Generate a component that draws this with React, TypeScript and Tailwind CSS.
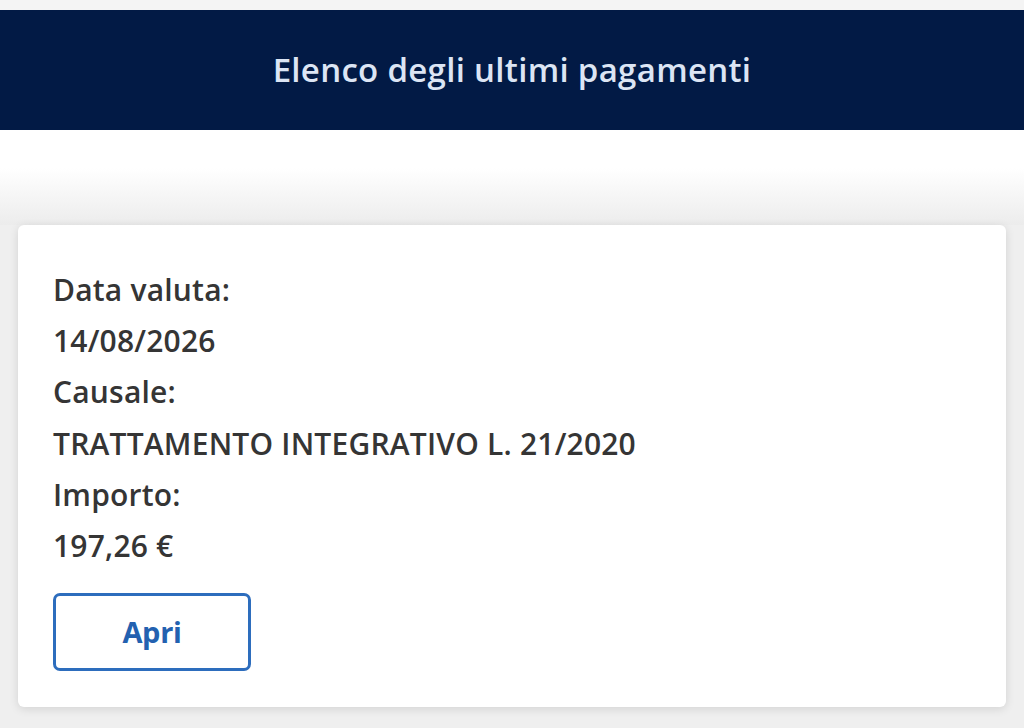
export default function App() {
  const font = { fontFamily: '"Open Sans", "Noto Sans", sans-serif' };
  return (
    <div className="w-[1024px] h-[728px] overflow-hidden bg-[#efefef] flex flex-col" style={font}>
      <div className="h-[10px] bg-[#f4f4f4]" />
      <div className="h-[120px] bg-[#021a45] flex items-center justify-center">
        <h1 className="text-[33px] font-semibold text-[#dce5f4] tracking-[0.3px] leading-none pb-[2px]">
          Elenco degli ultimi pagamenti
        </h1>
      </div>
      <div className="h-[95px] bg-gradient-to-b from-white from-40% to-[#ececec]" />
      <div className="px-[18px]">
        <div className="bg-white rounded-[6px] shadow-[0_2px_10px_rgba(0,0,0,0.12)] h-[482px] pl-[35px] pt-[39px]">
          <div className="flex flex-col text-[#353535] text-[30px] font-semibold tracking-[0.2px] leading-[51.2px]">
            <span>Data valuta:</span>
            <span>14/08/2026</span>
            <span>Causale:</span>
            <span>TRATTAMENTO INTEGRATIVO L. 21/2020</span>
            <span>Importo:</span>
            <span>197,26 €</span>
          </div>
          <button className="mt-[22px] w-[198px] h-[78px] border-[3px] border-[#2d6dbd] rounded-[7px] text-[#2361b0] text-[29px] font-bold tracking-[-0.3px] flex items-center justify-center">
            Apri
          </button>
        </div>
      </div>
    </div>
  );
}
